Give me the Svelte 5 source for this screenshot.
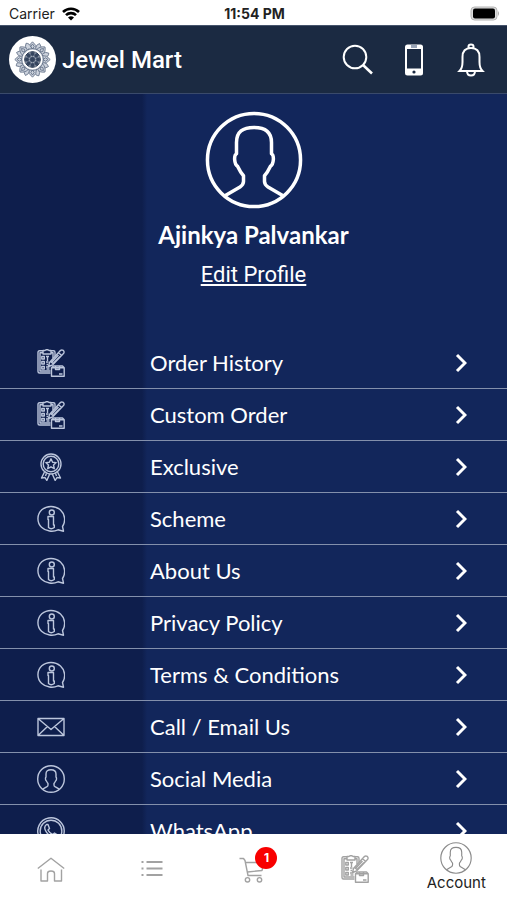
<script lang="ts">
  type MenuItem = { label: string; icon: string };
  type Tab = { label: string; icon: string; badge?: number };

  const items: MenuItem[] = [
    { label: 'Order History', icon: 'order' },
    { label: 'Custom Order', icon: 'order' },
    { label: 'Exclusive', icon: 'award' },
    { label: 'Scheme', icon: 'info' },
    { label: 'About Us', icon: 'info' },
    { label: 'Privacy Policy', icon: 'info' },
    { label: 'Terms & Conditions', icon: 'info' },
    { label: 'Call / Email Us', icon: 'mail' },
    { label: 'Social Media', icon: 'user' },
    { label: 'WhatsApp', icon: 'whatsapp' },
  ];

  const tabs: Tab[] = [
    { label: 'Home', icon: 'home' },
    { label: 'Categories', icon: 'list' },
    { label: 'Cart', icon: 'cart', badge: 1 },
    { label: 'Orders', icon: 'order' },
    { label: 'Account', icon: 'user' },
  ];

  const petals = [0, 45, 90, 135, 180, 225, 270, 315];

  let activeTab = $state('Account');
</script>

{#snippet icon(name: string)}
  <svg class="icon" viewBox="0 0 28 28" aria-hidden="true">
    {#if name === 'order'}
      <path d="M6 1.800H2.500Q1 1.800 1 3.300V22.500Q1 24 2.500 24H13.500M14 1.800H16.500Q18 1.800 18 3.300V7M6 3.800H3V22H13.500M14 3.800H16V9" />
      <path d="M6 1.500H8L9 .8H11L12 1.500H14V5H6Z" />
      <path d="M4.800 7.500H7.300V10H4.800ZM4.800 12.500H7.300V15H4.800ZM4.800 17.500H7.300V20H4.800ZM9 7.500H12M10.500 7.500V12M9 13H11.500M9.500 15.500H11M9 18H12.500M9.500 20H12.500" />
      <path d="M12.500 13.500L22.500 2.500Q24 .2 26.300 1.400Q28 3.200 26 5L15.500 16L11.500 17.500ZM13.500 12.500L16.500 15M21.500 3.800L24.800 6.500M14.500 13.500L21.500 6M16 14.500L23 7.500" />
      <path d="M14.500 18.800H27.200V27.200H14.500ZM14.500 18.800L16.500 17H25.500L27.200 18.800M18.500 17V20.500H22.500V17M22 25H25.500" />
    {:else if name === 'award'}
      <circle cx="14" cy="11" r="10" />
      <circle cx="14" cy="11" r="7.800" />
      <path d="M14 5.800L15.600 9.200L19.200 9.600L16.500 12L17.300 15.700L14 13.800L10.700 15.700L11.500 12L8.800 9.600L12.400 9.200Z" />
      <path d="M7.500 19L4.500 25L8 24.500L9.800 27.500L12.700 21M20.500 19L23.500 25L20 24.500L18.200 27.500L15.300 21M9.500 20.300L8.500 23M18.500 20.300L19.500 23" />
    {:else if name === 'info'}
      <path d="M26.500 26.200L25.500 21.500C29 16.500 28 9 23.500 5C18 .3 10 .3 4.800 4.800C-.3 9.500-.3 17.500 4.500 22.200C9 26.500 16 27.300 21 24.800Z" />
      <circle cx="14.800" cy="7.500" r="2.500" />
      <path d="M11 11.500H16.500V20H17.300V22.500Q14 25 11.500 22.500V14.500H11Z" />
    {:else if name === 'mail'}
      <path d="M1 5.500H27V22.500H1ZM1 5.500L14 16.500L27 5.500M1 22.500L10.500 13.500M27 22.500L17.500 13.500" />
    {:else if name === 'user'}
      <circle cx="14" cy="14" r="13.300" />
      <path d="M5.700 24.200L10 21.700Q11.100 21 11 19.900V18.500Q10.100 17.500 9.300 15.800C8.300 15.200 8.200 12.600 9 12.200V9C9 5.900 10.800 4.700 14 4.700S19 5.900 19 9V12.200C19.800 12.600 19.700 15.200 18.700 15.800Q17.900 17.500 17 18.500V19.900Q16.900 21 18 21.700L22.300 24.200" />
    {:else if name === 'whatsapp'}
      <path d="M1 27L2.500 20.500A13.200 13.200 0 1 1 7.500 25.500Z" />
      <circle cx="14" cy="14" r="10.800" />
      <path d="M9.500 7.500C7.500 9 7.200 11 8.500 13.500C10 16.500 12.500 19 16 20.500C18 21.300 20 20 20.500 18L17.500 16L15.500 17.500C13.500 16.500 12 15 11 13L12.500 11.500L11 7.500Z" />
    {:else if name === 'home'}
      <path d="M.8 13.500L14 3.200L27.200 13.500M4 14.500V26H10.500V18.500Q10.500 16 14 16Q17.500 16 17.500 18.500V26H24.500V14.500" />
    {:else if name === 'list'}
      <path class="thick" d="M3.500 7H5.500M8.500 7H24.500M3.500 13.500H5.500M8.500 13.500H24.500M3.500 20H5.500M8.500 20H24.500" />
    {:else if name === 'cart'}
      <path d="M.5 3.500H4.500L6 5.500L9 20.500H22.500M6.500 7.500H25L23 15.500L8.500 17" />
      <circle cx="8.500" cy="24.800" r="2.200" />
      <circle cx="20.500" cy="24.800" r="2.200" />
    {/if}
  </svg>
{/snippet}

<div class="app">
  <div class="status-bar">
    <div class="carrier">
      <span>Carrier</span>
      <svg class="wifi" viewBox="0 0 18 14" aria-hidden="true">
        <path d="M1 5A11.500 11.500 0 0 1 17 5M4 8.200A7 7 0 0 1 14 8.200" />
        <path class="dot" d="M9 13.500L6 10.500Q9 8 12 10.500Z" />
      </svg>
    </div>
    <time>11:54 PM</time>
    <svg class="battery" viewBox="0 0 30 15" aria-hidden="true">
      <rect class="shell" x="1" y="1" width="26" height="13" rx="3.500" />
      <rect x="3" y="2.500" width="22" height="10" rx="2" />
      <path class="cap" d="M28 5Q30 7.500 28 10Z" />
    </svg>
  </div>

  <header>
    <svg class="logo" viewBox="0 0 47 47" role="img" aria-label="Jewel Mart logo">
      <circle class="disc" cx="23.500" cy="23.500" r="23.500" />
      <g class="mandala">
        {#each petals as angle}
          <g transform="rotate({angle} 23.5 23.5)">
            <path class="petal" d="M19.500 14Q19 9 23.500 5.800Q28 9 27.500 14" />
            <path d="M23.500 8L21.800 10.500L23.500 13L25.200 10.500Z" />
            <path class="petal" d="M26.500 12.500Q27 8.500 30.500 7.500Q33 10 31 14" />
            <circle class="gem" cx="23.500" cy="18" r="2.200" />
          </g>
        {/each}
        <circle cx="23.500" cy="23.500" r="11" />
        <circle class="ring" cx="23.500" cy="23.500" r="7.800" />
        <circle class="gem" cx="23.500" cy="23.500" r="2.800" />
      </g>
    </svg>
    <h1>Jewel Mart</h1>
    <div class="actions">
      <button aria-label="Search">
        <svg viewBox="0 0 34 34" aria-hidden="true">
          <circle cx="15" cy="14" r="11.300" />
          <path class="handle" d="M23 22L32 30.500" />
        </svg>
      </button>
      <button aria-label="Mobile">
        <svg viewBox="0 0 34 34" aria-hidden="true">
          <rect class="phone" x="8" y="1.500" width="18" height="31" rx="2.500" />
          <rect class="screen" x="10" y="6" width="14" height="19.500" />
          <rect class="speaker" x="14" y="2" width="6" height="3" />
          <circle class="screen" cx="17" cy="29" r="1.600" />
        </svg>
      </button>
      <button aria-label="Notifications">
        <svg viewBox="0 0 34 34" aria-hidden="true">
          <path d="M14.500 5V3.500Q14.500 1.500 17 1.500T19.500 3.500V5M5.500 28Q8.500 25 8.500 19V14C8.500 8 12 5 17 5S25.500 8 25.500 14V19Q25.500 25 28.500 28ZM13 28Q13 32.500 17 32.500T21 28" />
        </svg>
      </button>
    </div>
  </header>

  <main>
    <section class="profile">
      <div class="avatar">{@render icon('user')}</div>
      <h2>Ajinkya Palvankar</h2>
      <a href="#edit-profile">Edit Profile</a>
    </section>

    <nav class="menu" aria-label="Account menu">
      {#each items as item}
        <button class="menu-item">
          <span class="menu-icon">{@render icon(item.icon)}</span>
          <span class="menu-label">{item.label}</span>
          <svg class="chevron" viewBox="0 0 12 20" aria-hidden="true">
            <path d="M2 2L10 10L2 18" />
          </svg>
        </button>
      {/each}
    </nav>
  </main>

  <nav class="tab-bar" aria-label="Main">
    {#each tabs as tab}
      <button
        class="tab"
        class:active={tab.label === activeTab}
        aria-label={tab.label}
        onclick={() => { activeTab = tab.label; }}
      >
        <span class="tab-icon">
          {@render icon(tab.icon)}
          {#if tab.badge}
            <span class="badge">{tab.badge}</span>
          {/if}
        </span>
        {#if tab.label === activeTab}
          <span class="tab-label">{tab.label}</span>
        {/if}
      </button>
    {/each}
  </nav>
</div>

<style>
  :global(body) {
    margin: 0;
  }

  .app {
    display: flex;
    flex-direction: column;
    height: 100vh;
    background: #12265b;
    color: #fff;
    font-family: Lato, sans-serif;
  }

  button {
    padding: 0;
    border: none;
    background: none;
    color: inherit;
    font: inherit;
    cursor: pointer;
  }

  svg {
    display: block;
    fill: none;
    stroke: currentColor;
  }

  .icon {
    width: 28px;
    height: 28px;
    stroke-width: 1.4;
    stroke-linejoin: round;
  }

  .icon .thick {
    stroke-width: 2;
  }

  /* Status bar */
  .status-bar {
    display: grid;
    grid-template-columns: 1fr auto 1fr;
    align-items: center;
    flex-shrink: 0;
    height: 25px;
    padding: 2px 7px 0 9px;
    box-sizing: border-box;
    background: #fff;
    color: #222;
    font: 14px Inter, sans-serif;
  }

  .carrier {
    display: flex;
    align-items: center;
    gap: 7px;
  }

  .status-bar time {
    font-weight: 700;
  }

  .wifi {
    width: 18px;
    height: 14px;
    color: #000;
    stroke-width: 2.6;
  }

  .wifi .dot {
    fill: #000;
    stroke: none;
  }

  .battery {
    justify-self: end;
    width: 30px;
    height: 15px;
    fill: #000;
    stroke: none;
  }

  .battery .shell {
    fill: #ddd;
    stroke: #b4b4b4;
  }

  .battery .cap {
    fill: #aaa;
  }

  /* Header */
  header {
    display: flex;
    align-items: center;
    gap: 6px;
    flex-shrink: 0;
    height: 69px;
    padding: 0 19px 0 9px;
    box-sizing: border-box;
    border-top: 1px solid #46546c;
    border-bottom: 1px solid #3a4a6b;
    background: #1b2a42;
  }

  .logo {
    width: 47px;
    height: 47px;
  }

  .logo .disc {
    fill: #fff;
    stroke: none;
  }

  .mandala {
    stroke: #5f6d84;
    stroke-width: 0.8;
  }

  .mandala .petal {
    fill: #ccd2dc;
  }

  .mandala .ring {
    stroke: #26364f;
    stroke-width: 1;
  }

  .mandala .gem {
    fill: #34445e;
  }

  h1 {
    flex: 1;
    margin: 0;
    font: 500 24px/32px Roboto, sans-serif;
  }

  .actions {
    display: flex;
    gap: 23px;
  }

  .actions svg {
    width: 34px;
    height: 34px;
    stroke-width: 2;
  }

  .actions .handle {
    stroke-width: 2.6;
  }

  .actions .phone {
    fill: #fff;
    stroke: none;
  }

  .actions .screen {
    fill: #1b2a42;
    stroke: none;
  }

  .actions .speaker {
    fill: #9aa5b8;
    stroke: none;
  }

  /* Account page */
  main {
    flex: 1;
    min-height: 0;
    overflow-y: auto;
    scrollbar-width: none;
    background: linear-gradient(90deg, #0e1e4c 28%, #12265b 29%);
  }

  .profile {
    display: flex;
    flex-direction: column;
    align-items: center;
    padding: 17px 0 46px;
  }

  .avatar .icon {
    width: 98px;
    height: 98px;
    stroke-width: 1;
  }

  h2 {
    margin: 10px 0 8px;
    font-size: 24px;
    line-height: 32px;
    font-weight: 700;
  }

  .profile a {
    color: #fff;
    font: 22px/32px Roboto, sans-serif;
    text-underline-offset: 2px;
    text-decoration-thickness: 2px;
  }

  .menu-item {
    display: grid;
    grid-template-columns: 102px 1fr auto;
    align-items: center;
    column-gap: 48px;
    width: 100%;
    height: 52px;
    padding-right: 40px;
    border-bottom: 1px solid #8390ac;
    text-align: left;
  }

  .menu-icon {
    justify-self: center;
    color: #bcc6dc;
  }

  .menu-label {
    font-size: 22px;
    line-height: 32px;
  }

  .chevron {
    width: 12px;
    height: 20px;
    stroke-width: 3;
  }

  /* Tab bar */
  .tab-bar {
    display: grid;
    grid-template-columns: repeat(5, 1fr);
    flex-shrink: 0;
    height: 66px;
    background: #fff;
    color: #a2a2a2;
  }

  .tab {
    display: flex;
    flex-direction: column;
    align-items: center;
    justify-content: center;
  }

  .tab-icon {
    position: relative;
    padding-top: 4px;
  }

  .tab.active .tab-icon {
    padding: 0;
    color: #8a8a8a;
  }

  .tab.active .icon {
    width: 32px;
    height: 32px;
    stroke-width: 1;
  }

  .tab-label {
    color: #222;
    font: 15px/18px Inter, sans-serif;
  }

  .badge {
    position: absolute;
    top: -4px;
    right: -10px;
    width: 22px;
    height: 22px;
    border-radius: 50%;
    background: #f80000;
    color: #fff;
    font: 700 12px/22px Inter, sans-serif;
    text-align: center;
  }
</style>
